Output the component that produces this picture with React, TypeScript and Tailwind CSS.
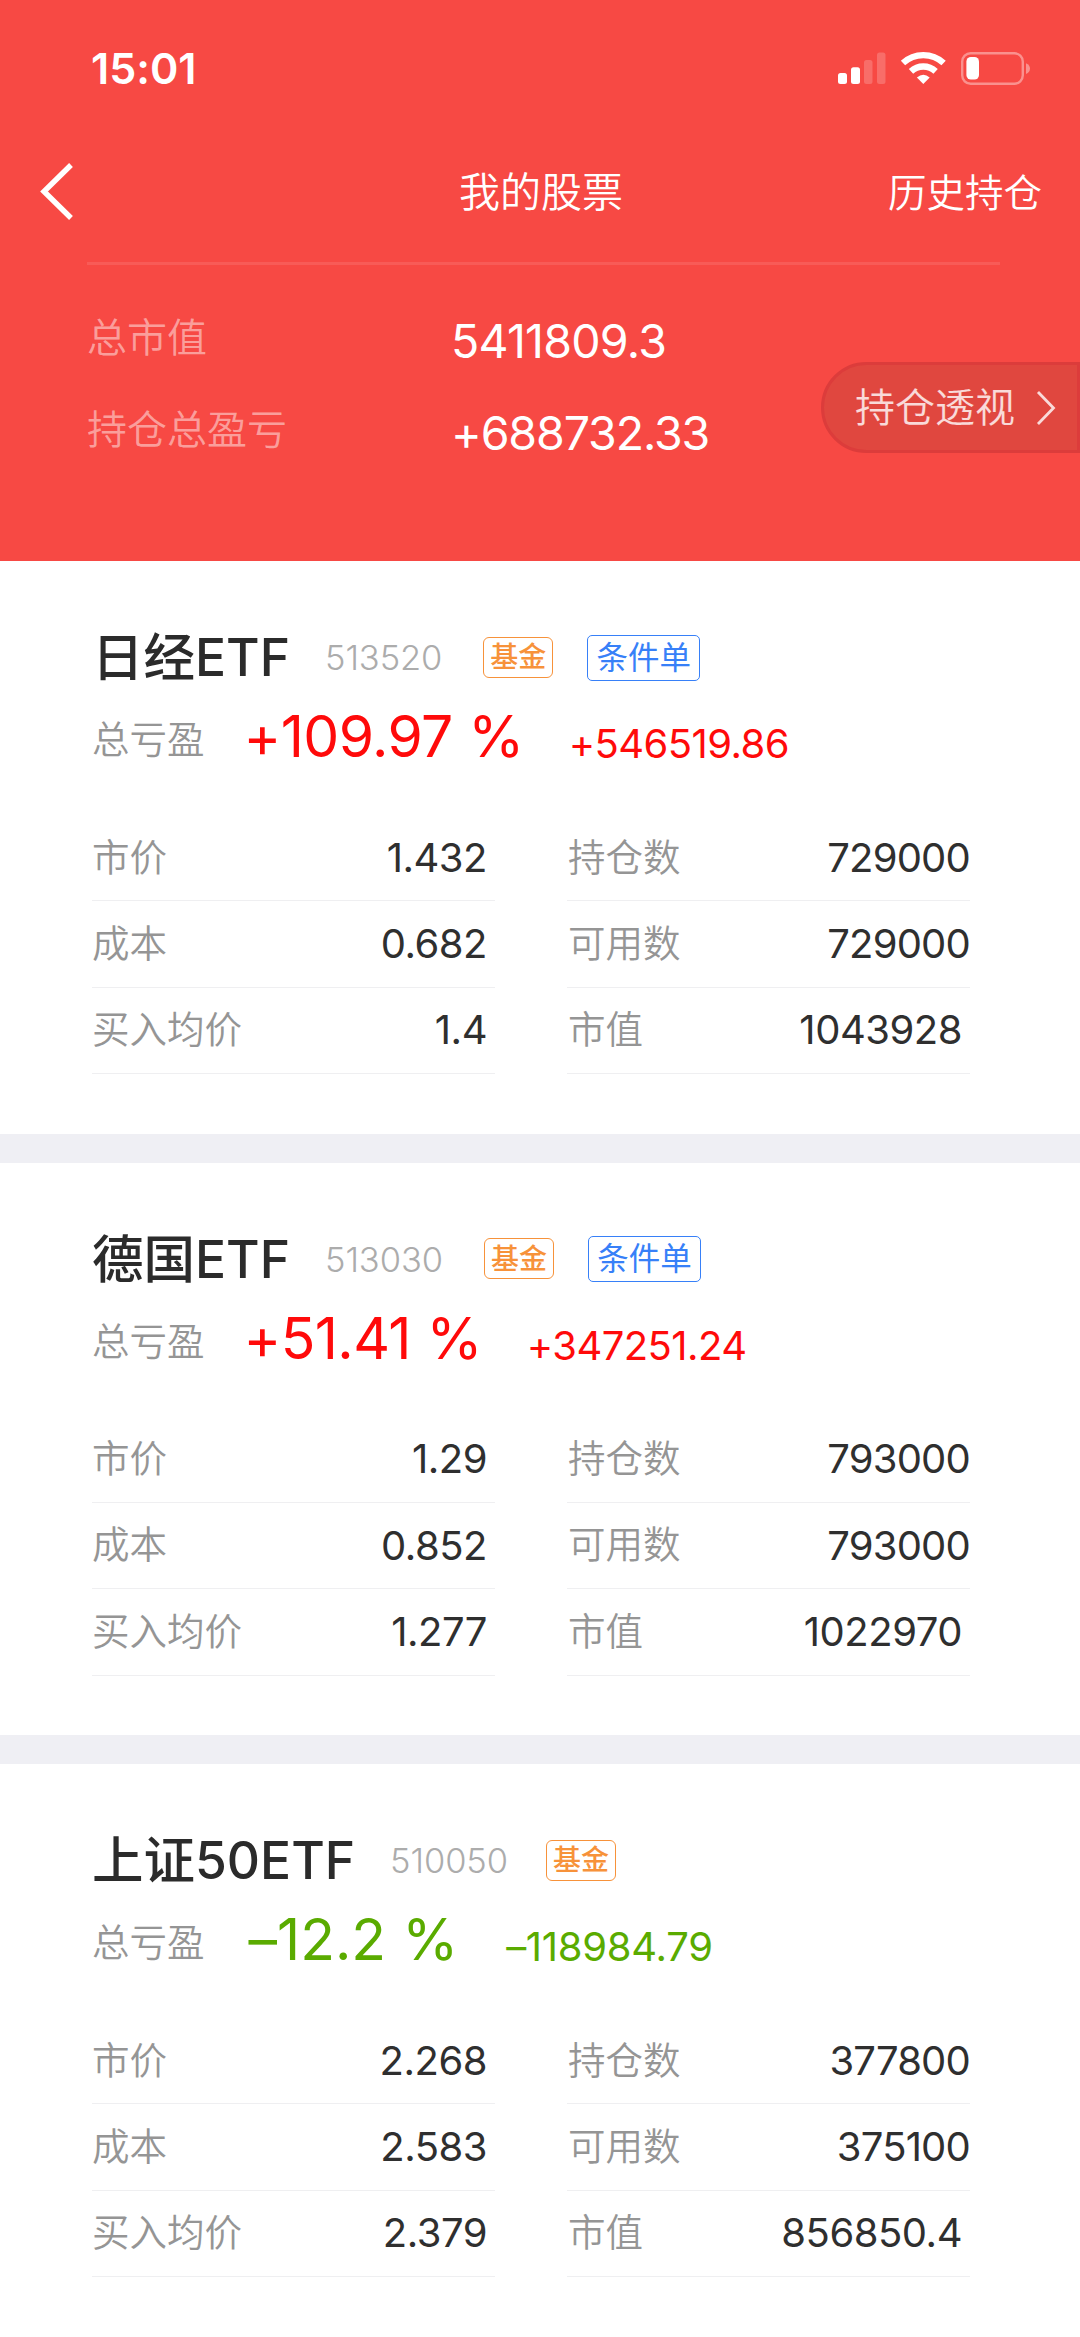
import clsx from "clsx";

type Holding = {
  name: string;
  code: string;
  conditional: boolean;
  percent: string;
  amount: string;
  up: boolean;
  left: [string, string][];
  right: [string, string][];
};

const holdings: Holding[] = [
  {
    name: "日经ETF",
    code: "513520",
    conditional: true,
    percent: "+109.97 %",
    amount: "+546519.86",
    up: true,
    left: [["市价", "1.432"], ["成本", "0.682"], ["买入均价", "1.4"]],
    right: [["持仓数", "729000"], ["可用数", "729000"], ["市值", "1043928"]],
  },
  {
    name: "德国ETF",
    code: "513030",
    conditional: true,
    percent: "+51.41 %",
    amount: "+347251.24",
    up: true,
    left: [["市价", "1.29"], ["成本", "0.852"], ["买入均价", "1.277"]],
    right: [["持仓数", "793000"], ["可用数", "793000"], ["市值", "1022970"]],
  },
  {
    name: "上证50ETF",
    code: "510050",
    conditional: false,
    percent: "–12.2 %",
    amount: "–118984.79",
    up: false,
    left: [["市价", "2.268"], ["成本", "2.583"], ["买入均价", "2.379"]],
    right: [["持仓数", "377800"], ["可用数", "375100"], ["市值", "856850.4"]],
  },
];

const StatusBar = () => (
  <div className="flex h-[138px] items-start justify-between pl-[91px] pr-[49px] text-white">
    <span className="mt-[42px] text-[43px] leading-[52px] font-semibold">15:01</span>
    <svg className="mt-[48px]" width="194" height="40" viewBox="836 48 194 40" fill="white">
      <rect x="837" y="73" width="9" height="11" rx="2.5" />
      <rect x="850" y="67.3" width="9" height="16.7" rx="2.5" />
      <rect x="863" y="60" width="8.5" height="24" rx="2.5" opacity="0.2" />
      <rect x="876" y="52.5" width="8.5" height="31.5" rx="2.5" opacity="0.2" />
      <path d="M922.3 84l-6.4-6.6q6.4-5.4 12.8 0z" />
      <path d="M910 71.4a18 18 0 0 1 24.6 0" fill="none" stroke="white" strokeWidth="6.4" />
      <path d="M902 63a30 30 0 0 1 40.6 0" fill="none" stroke="white" strokeWidth="6.4" />
      <rect x="961.2" y="53.2" width="60.6" height="30.6" rx="8.5" fill="none" stroke="white" strokeWidth="2.4" opacity="0.4" />
      <rect x="965.4" y="57" width="12.6" height="22.6" rx="4.5" />
      <path d="M1025 63.2c5.3 2 5.3 8.8 0 10.8z" opacity="0.4" />
    </svg>
  </div>
);

const Header = () => (
  <header className="h-[561px] bg-[#f74944] text-white">
    <StatusBar />
    <div className="grid h-[124px] grid-cols-3 items-start pl-10 pr-[38px]">
      <svg className="mt-[25px]" width="34" height="57" viewBox="0 0 34 57" fill="none" stroke="white" strokeWidth="5.4">
        <path d="M31 2L4 28.5L31 55" />
      </svg>
      <h1 className="mt-[24px] text-center text-[41px] leading-[60px] font-[350]">我的股票</h1>
      <span className="mt-[25px] text-right text-[38.5px] leading-[60px] font-[350]">历史持仓</span>
    </div>
    <div className="ml-[87px] mr-20 h-[3px] bg-white/10" />
    <div className="flex">
      <dl className="ml-[87px] grid w-[734px] grid-cols-[364px_1fr] auto-rows-[92px] pt-[28px]">
        <dt className="text-[40px] leading-[90px] font-[350] text-white/48">总市值</dt>
        <dd className="pt-[3px] text-[46.5px] leading-[90px] tracking-[-0.016em]">5411809.3</dd>
        <dt className="text-[40px] leading-[90px] font-[350] text-white/48">持仓总盈亏</dt>
        <dd className="pt-[3px] text-[46.5px] leading-[90px] tracking-[-0.024em]">+688732.33</dd>
      </dl>
      <button className="mt-[97px] flex h-[91px] w-[259px] items-center rounded-l-full border-[3px] border-[#dc3c3b] bg-[#e0473f] pl-[31px] text-[40px] font-[350] text-white/80">
        持仓透视
        <svg className="ml-[21px]" width="20" height="36" viewBox="0 0 20 36" fill="none" stroke="currentColor" strokeWidth="2.8">
          <path d="M2 2L17.5 18L2 34" />
        </svg>
      </button>
    </div>
  </header>
);

const Rows = ({ rows, wide }: { rows: [string, string][]; wide?: boolean }) => (
  <div className="w-[403px]">
    {rows.map(([label, value]) => {
      const inset = !wide || label === "市值";
      return (
        <div
          key={label}
          className={clsx(
            "flex h-[86.4px] items-center justify-between border-b-[1.5px] border-[#efeff1]",
            inset && "pr-[8px]",
            wide && "pl-[1px]",
          )}
        >
          <span className="text-[37.5px] font-[350] text-[#959595]">{label}</span>
          <span className={clsx("text-[40px] text-[#2f2f2f]", inset ? "tracking-[-0.012em]" : "tracking-[-0.02em]")}>{value}</span>
        </div>
      );
    })}
  </div>
);

const HoldingCard = ({ item }: { item: Holding }) => (
  <section className="h-[601.5px] border-b-[29px] border-[#efeff4] bg-white pl-[92px] pt-[62px]">
    <div className="flex h-[70px] items-center">
      <h2 className="text-[51.5px] font-medium text-[#2b2b2b]">{item.name}</h2>
      <span className="ml-[35px] text-[34.5px] font-light tracking-[-0.003em] text-[#acacac]">{item.code}</span>
      <span className={clsx("mb-[2px] flex h-[41px] w-[70px] items-center justify-center rounded-[6px] border-[1.5px] border-[#f7923a] text-[28px] font-medium text-[#f7923a]", item.conditional ? "ml-[41px]" : "ml-[38px]")}>基金</span>
      {item.conditional && (
        <span className="mb-[1px] ml-[34px] flex h-[46px] w-[113px] items-center justify-center rounded-[5px] border-[1.5px] border-[#3780f8] text-[31.5px] text-[#3780f8]">条件单</span>
      )}
    </div>
    <div className="flex h-[77px] items-baseline">
      <span className="relative top-[-3px] text-[37.5px] font-[350] text-[#959595]">总亏盈</span>
      <span className={clsx("relative top-[1px] text-[57px]", item.up ? "ml-[39px] tracking-[-0.01em] text-[#ff0a0a]" : "ml-[44px] text-[#5aab00]")}>{item.percent}</span>
      <span className={clsx("relative top-[2px] text-[40px]", item.up ? "ml-[45px] tracking-[-0.014em] text-[#ff0a0a]" : "ml-[48px] tracking-[-0.007em] text-[#5aab00]")}>{item.amount}</span>
    </div>
    <div className="mt-[45px] flex gap-[72px]">
      <Rows rows={item.left} />
      <Rows rows={item.right} wide />
    </div>
  </section>
);

export default function App() {
  return (
    <main className="h-[2337px] w-[1080px] overflow-hidden bg-white font-['Inter','Noto_Sans_CJK_SC',sans-serif] font-normal whitespace-nowrap [font-feature-settings:'calt'_0]">
      <Header />
      {holdings.map((item) => (
        <HoldingCard key={item.code} item={item} />
      ))}
    </main>
  );
}
